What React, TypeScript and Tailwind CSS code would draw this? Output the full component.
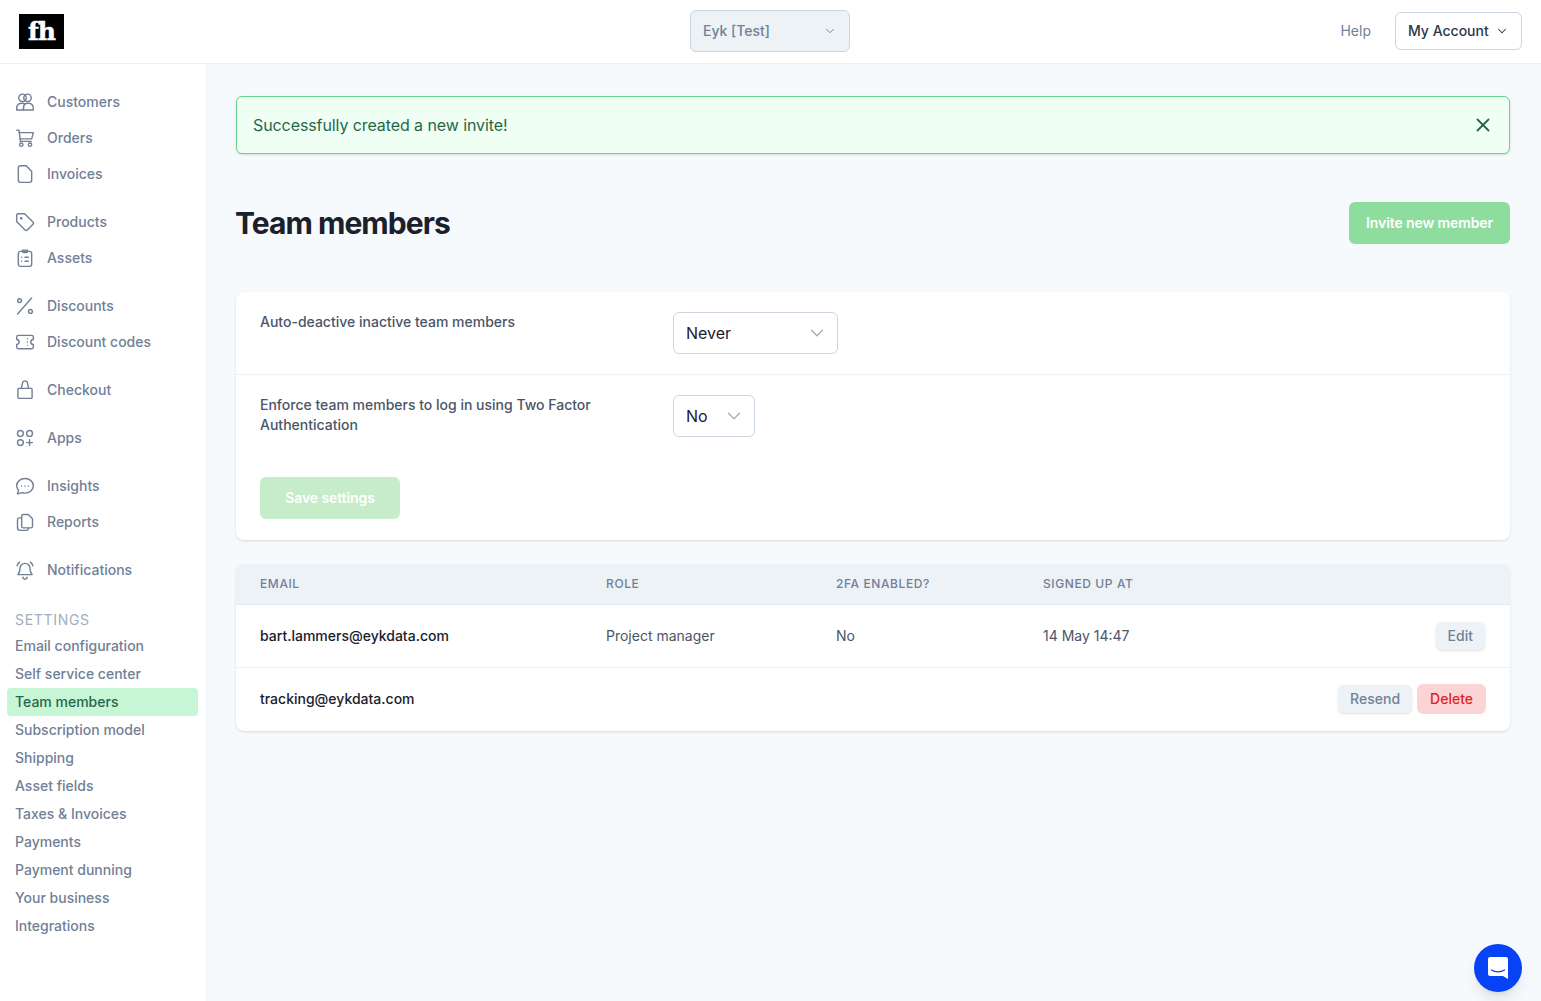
import type { ReactNode } from 'react';
import { ChevronDown, X } from 'lucide-react';

const iconProps = {
	width: 20,
	height: 20,
	viewBox: '0 0 24 24',
	fill: 'none',
	stroke: 'currentColor',
	strokeWidth: 1.7,
	strokeLinecap: 'round' as const,
	strokeLinejoin: 'round' as const,
};

const Svg = ({ children }: { children: ReactNode }) => <svg {...iconProps}>{children}</svg>;

const icons: Record<string, ReactNode> = {
	customers: (
		<Svg>
			<circle cx="9" cy="7" r="4.500" />
			<circle cx="15" cy="7" r="4.500" />
			<path d="M2 21.500v-2C2 15.500 5 13.500 8.500 13.500c2 0 3.500.7 3.500.7s1.500-.7 3.500-.7c3.500 0 6.500 2 6.500 6v2z" />
			<path d="M12 14.200c-1.500 1.500-2 3.800-2 7.300" />
		</Svg>
	),
	orders: (
		<Svg>
			<path d="M2 2.500h2.800L6.500 16h13" />
			<path d="M5 5.500h17l-2 7.500H6" />
			<circle cx="7.500" cy="20" r="2" />
			<circle cx="18" cy="20" r="2" />
		</Svg>
	),
	invoices: (
		<Svg>
			<path d="M4 4.500a2.500 2.500 0 0 1 2.500-2.500h7L20 9v10.500a2.500 2.500 0 0 1-2.500 2.500h-11A2.500 2.500 0 0 1 4 19.500z" />
		</Svg>
	),
	products: (
		<Svg>
			<path d="M2 4a2 2 0 0 1 2-2h7.500l10 10a2 2 0 0 1 0 2.800l-6.700 6.700a2 2 0 0 1-2.800 0L2 11.500z" />
			<circle cx="7.500" cy="7.500" r=".8" />
		</Svg>
	),
	assets: (
		<Svg>
			<rect x="4" y="4" width="16" height="18" rx="2.500" />
			<path d="M9 4V2.500h6V4a1.500 1.500 0 0 1-1.500 1.500h-3A1.500 1.500 0 0 1 9 4z" />
			<path d="M8 11h.01M8 16h.01M12 11h4M12 16h4" />
		</Svg>
	),
	discounts: (
		<Svg>
			<path d="M20 2.500 3 21.500" />
			<circle cx="5.500" cy="5.500" r="2.300" />
			<circle cx="18.500" cy="18.500" r="2.300" />
		</Svg>
	),
	codes: (
		<Svg>
			<path d="M2 6a2 2 0 0 1 2-2h16a2 2 0 0 1 2 2v3a3 3 0 0 0 0 6v3a2 2 0 0 1-2 2H4a2 2 0 0 1-2-2v-3a3 3 0 0 0 0-6z" />
			<path d="M15 8v.01M15 12v.01M15 16v.01" />
		</Svg>
	),
	checkout: (
		<Svg>
			<path d="M4.500 10h15a1 1 0 0 1 1 1v10a1 1 0 0 1-1 1h-15a1 1 0 0 1-1-1V11a1 1 0 0 1 1-1z" />
			<path d="M7.500 10l1.500-6a3 3 0 0 1 6 0l1.500 6" />
		</Svg>
	),
	apps: (
		<Svg>
			<circle cx="6.500" cy="6.500" r="3.500" />
			<circle cx="17.500" cy="6.500" r="3.500" />
			<circle cx="6.500" cy="17.500" r="3.500" />
			<path d="M17.500 14v7M14 17.500h7" />
		</Svg>
	),
	insights: (
		<Svg>
			<path d="M12 3c5.500 0 10 3.800 10 8.700s-4.500 8.800-10 8.800c-1.300 0-2.500-.2-3.600-.6L3 21.500l1.200-4.300C2.800 15.700 2 13.800 2 11.700 2 6.800 6.500 3 12 3z" />
			<path d="M8 12h.01M12 12h.01M16 12h.01" />
		</Svg>
	),
	reports: (
		<Svg>
			<path d="M8 5a2 2 0 0 1 2-2h6l5 5v9a2 2 0 0 1-2 2h-9a2 2 0 0 1-2-2z" />
			<path d="M8 7H5a2 2 0 0 0-2 2v10a3 3 0 0 0 3 3h8a2 2 0 0 0 2-2v-1" />
		</Svg>
	),
	notifications: (
		<Svg>
			<path d="M6 10a6 6 0 0 1 12 0c0 5 2 6.500 2.500 7.500h-17C4 16.500 6 15 6 10z" />
			<path d="M9.500 20.500a2.500 2.500 0 0 0 5 0" />
			<path d="M2.500 7C3 5 4 3.500 5.500 2.500M21.500 7C21 5 20 3.500 18.500 2.500" />
		</Svg>
	),
};

const navGroups = [
	[
		{ label: 'Customers', icon: 'customers' },
		{ label: 'Orders', icon: 'orders' },
		{ label: 'Invoices', icon: 'invoices' },
	],
	[
		{ label: 'Products', icon: 'products' },
		{ label: 'Assets', icon: 'assets' },
	],
	[
		{ label: 'Discounts', icon: 'discounts' },
		{ label: 'Discount codes', icon: 'codes' },
	],
	[{ label: 'Checkout', icon: 'checkout' }],
	[{ label: 'Apps', icon: 'apps' }],
	[
		{ label: 'Insights', icon: 'insights' },
		{ label: 'Reports', icon: 'reports' },
	],
	[{ label: 'Notifications', icon: 'notifications' }],
];

const settings = [
	'Email configuration',
	'Self service center',
	'Team members',
	'Subscription model',
	'Shipping',
	'Asset fields',
	'Taxes & Invoices',
	'Payments',
	'Payment dunning',
	'Your business',
	'Integrations',
];

function Select({ value, width }: { value: string; width: string }) {
	return (
		<div className={`flex h-[42px] items-center justify-between rounded-md border border-[#cbd5e0] bg-white pl-3 pr-[9px] ${width} text-base text-[#1a202c]`}>
			<span>{value}</span>
			<ChevronDown size={22} strokeWidth={1.4} className="text-[#a0aec0]" />
		</div>
	);
}

function SmallButton({ children, danger }: { children: ReactNode; danger?: boolean }) {
	return (
		<button
			className={`rounded-md text-sm font-medium ${danger ? 'h-[30px] bg-[#fbd5d5] px-[13px] text-[#e02424]' : 'h-7 bg-[#edf2f7] px-3 text-[#718096] shadow-sm'}`}
		>
			{children}
		</button>
	);
}

export default function App() {
	return (
		<div className="flex h-[1001px] flex-col overflow-hidden bg-[#f7fafc] font-['Inter',sans-serif] text-sm antialiased">
			{/* Top bar */}
			<header className="relative flex h-[64px] shrink-0 items-center justify-between border-b border-[#edf2f7] bg-white pl-[19px] pr-[19px]">
				<div className="flex h-[35px] w-[45px] items-center justify-center bg-black font-['DejaVu_Serif',serif] text-[25px] font-bold tracking-[-1px] text-white [-webkit-text-stroke:0.5px_white]">
					fh
				</div>
				<div className="absolute left-[690px] top-[10px] flex h-[42px] w-[160px] items-center justify-between rounded-md border border-[#cbd5e0] bg-[#edf2f7] pl-3 pr-3 text-sm font-medium text-[#718096]">
					<span>Eyk [Test]</span>
					<ChevronDown size={14} strokeWidth={1.6} />
				</div>
				<div className="mb-[2px] flex items-center gap-6">
					<span className="text-sm text-[#718096]">Help</span>
					<button className="flex h-[38px] w-[127px] items-center justify-between rounded-md border border-[#cbd5e0] bg-white pl-3 pr-3 text-sm font-medium text-[#2d3748]">
						My Account
						<ChevronDown size={14} strokeWidth={1.8} />
					</button>
				</div>
			</header>

			<div className="flex flex-1">
				{/* Sidebar */}
				<aside className="w-[207px] shrink-0 border-r border-[#edf2f7] bg-white pt-5">
					<nav className="flex flex-col gap-3">
						{navGroups.map((group, i) => (
							<div key={i} className="flex flex-col">
								{group.map((item) => (
									<div key={item.label} className="flex h-9 items-center gap-3 pl-[15px] font-medium text-[#718096]">
										{icons[item.icon]}
										{item.label}
									</div>
								))}
							</div>
						))}
					</nav>
					<div className="mt-[22px] pl-[15px] text-sm uppercase leading-5 tracking-wider text-[#a0aec0]">Settings</div>
					<div className="mt-[2px] flex flex-col pl-[7px] pr-2">
						{settings.map((name) => (
							<div
								key={name}
								className={`flex h-7 items-center rounded-sm px-2 font-medium ${name === 'Team members' ? 'bg-[#c6f6d5] text-[#276749]' : 'text-[#718096]'}`}
							>
								{name}
							</div>
						))}
					</div>
				</aside>

				{/* Content */}
				<main className="flex-1 pl-[29px] pr-[31px] pt-8">
					<div className="flex h-[58px] items-center justify-between rounded-md border border-[#68d391] bg-[#f0fff4] pl-4 pr-[15px] text-base tracking-[-0.09px] text-[#276749] shadow-sm">
						Successfully created a new invite!
						<X size={22} strokeWidth={2} />
					</div>

					<div className="mt-12 flex h-[42px] items-center justify-between">
						<h1 className="-ml-px text-3xl font-bold tracking-[-0.95px] text-[#1a202c]">Team members</h1>
						<button className="h-[42px] w-[161px] rounded-md bg-[#8fdc9f] text-sm font-semibold tracking-[-0.1px] text-white">Invite new member</button>
					</div>

					<section className="mt-12 rounded-lg bg-white shadow">
						<div className="flex h-[83px] border-b border-[#edf2f7] px-6 pt-5">
							<div className="w-[413px] font-medium leading-5 text-[#4a5568]">Auto-deactive inactive team members</div>
							<Select value="Never" width="w-[165px]" />
						</div>
						<div className="flex px-6 pt-5">
							<div className="w-[413px] pr-16 font-medium leading-5 text-[#4a5568]">Enforce team members to log in using Two Factor Authentication</div>
							<Select value="No" width="w-[82px]" />
						</div>
						<div className="px-6 pb-[21px] pt-10">
							<button className="h-[42px] w-[140px] rounded-md bg-[#c6ecc9] text-sm font-semibold tracking-[-0.1px] text-white">Save settings</button>
						</div>
					</section>

					<section className="mt-6 overflow-hidden rounded-lg bg-white shadow">
						<table className="w-full table-fixed border-collapse text-left">
							<thead>
								<tr className="h-[40px] border-b border-[#e2e8f0] bg-[#edf2f7] text-xs font-medium uppercase tracking-wider text-[#718096]">
									<th className="w-[346px] pl-6 font-medium">Email</th>
									<th className="w-[230px] pl-6 font-medium">Role</th>
									<th className="w-[207px] pl-6 font-medium">2FA enabled?</th>
									<th className="w-[220px] pl-6 font-medium">Signed up at</th>
									<th />
								</tr>
							</thead>
							<tbody>
								<tr className="h-[63px] border-b border-[#edf2f7]">
									<td className="pl-6 font-medium text-[#1a202c]">bart.lammers@eykdata.com</td>
									<td className="pl-6 text-[#4a5568]">Project manager</td>
									<td className="pl-6 text-[#4a5568]">No</td>
									<td className="pl-6 text-[#4a5568]">14 May 14:47</td>
									<td className="pr-[25px] text-right">
										<SmallButton>Edit</SmallButton>
									</td>
								</tr>
								<tr className="h-[64px]">
									<td className="pl-6 font-medium text-[#1a202c]">tracking@eykdata.com</td>
									<td />
									<td />
									<td />
									<td className="pr-6 text-right">
										<div className="flex items-center justify-end gap-[5px]">
											<SmallButton>Resend</SmallButton>
											<SmallButton danger>Delete</SmallButton>
										</div>
									</td>
								</tr>
							</tbody>
						</table>
					</section>
				</main>
			</div>

			{/* Chat launcher */}
			<div className="fixed bottom-[9px] right-[19px] flex h-12 w-12 items-center justify-center rounded-full bg-[#0742f5] shadow-lg">
				<svg width="22" height="24" viewBox="0 0 22 24">
					<path d="M3 1h16a2 2 0 0 1 2 2v20l-5-3H3a2 2 0 0 1-2-2V3a2 2 0 0 1 2-2z" fill="#fff" />
					<path d="M4.500 14c3.500 2.500 9.500 2.500 13 0" fill="none" stroke="#0742f5" strokeWidth="1.300" strokeLinecap="round" />
				</svg>
			</div>
		</div>
	);
}
